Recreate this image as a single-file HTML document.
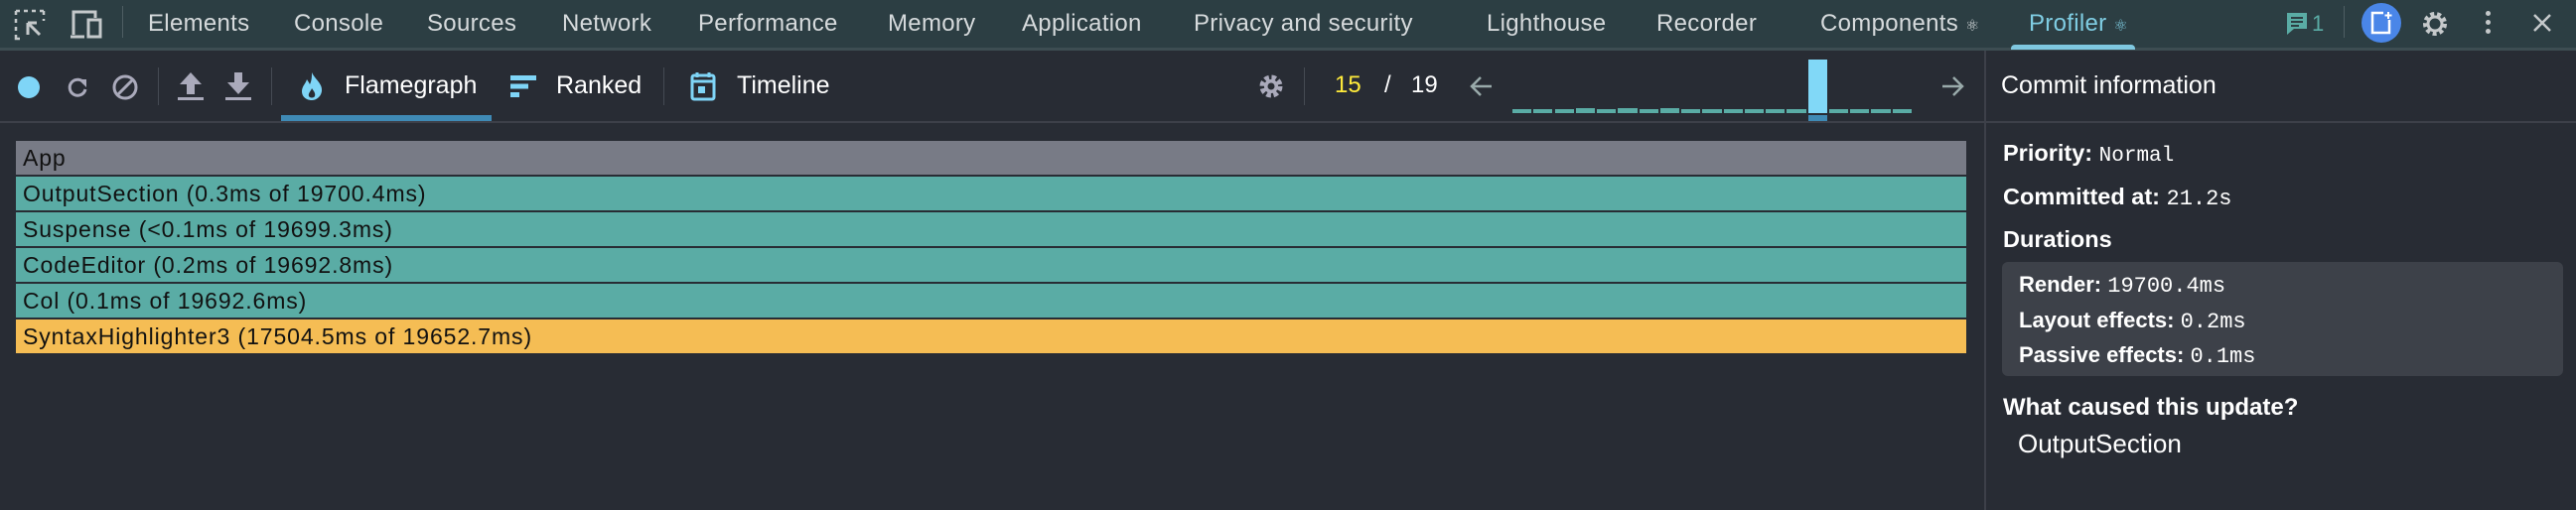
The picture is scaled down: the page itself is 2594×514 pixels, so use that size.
<!DOCTYPE html>
<html><head><meta charset="utf-8"><style>
*{margin:0;padding:0;box-sizing:border-box}
body{width:2594px;height:514px;background:#282c34;font-family:"Liberation Sans",sans-serif;position:relative;overflow:hidden;color:#fff}
.a{position:absolute;white-space:nowrap}
.tab{position:absolute;top:10px;font-size:24px;color:#d6dadc;letter-spacing:0.3px}
.tb{position:absolute;font-size:25px;color:#fff;top:72px}
.row{position:absolute;left:16px;width:1964px;height:34px;font-size:23px;letter-spacing:0.9px;color:#111;padding-left:7px;line-height:34px}
.teal{background:#5aaca5}
.mono{font-family:"Liberation Mono",monospace;font-weight:normal}
.lab{font-weight:bold;font-size:22px;color:#fff}
.h{font-size:23.5px}
</style></head><body>
<div class="a" style="left:0;top:0;width:2594px;height:49px;background:#2c3e43"></div>
<div class="a" style="left:0;top:48px;width:2594px;height:3px;background:#3d4d52"></div>
<svg class="a" style="left:14px;top:9px" width="34" height="32" viewBox="0 0 34 32"><path d="M2 2h4M10 2h4M18 2h4M26 2h4M2 2v4M2 10v4M2 18v4M2 26v4h4M30 2v4M30 10v2" stroke="#c5c9cb" stroke-width="2.5" fill="none"/><path d="M14 14v12M14 14h9M14 14l12 12" stroke="#c5c9cb" stroke-width="3" fill="none"/></svg>
<svg class="a" style="left:70px;top:9px" width="36" height="32" viewBox="0 0 36 32"><path d="M4 26V3h22v6" stroke="#c5c9cb" stroke-width="3" fill="none"/><path d="M1 28h14" stroke="#c5c9cb" stroke-width="3"/><rect x="19" y="11" width="12" height="17" stroke="#c5c9cb" stroke-width="3" fill="none"/></svg>
<div class="a" style="left:123px;top:6px;width:1px;height:32px;background:#4e5e63"></div>
<div class="tab" style="left:149px">Elements</div>
<div class="tab" style="left:296px">Console</div>
<div class="tab" style="left:430px">Sources</div>
<div class="tab" style="left:566px">Network</div>
<div class="tab" style="left:703px">Performance</div>
<div class="tab" style="left:894px">Memory</div>
<div class="tab" style="left:1029px">Application</div>
<div class="tab" style="left:1202px">Privacy and security</div>
<div class="tab" style="left:1497px">Lighthouse</div>
<div class="tab" style="left:1668px">Recorder</div>
<div class="tab" style="left:1833px">Components <span style="font-size:16px">⚛</span></div>
<div class="tab" style="left:2043px;color:#7fcde3">Profiler <span style="font-size:16px">⚛</span></div>
<div class="a" style="left:2025px;top:45px;width:125px;height:5px;background:#7fc8e0;border-radius:4px 4px 0 0"></div>
<svg class="a" style="left:2302px;top:12px" width="22" height="24" viewBox="0 0 22 24"><path d="M1 1h20v16H8l-7 6z" fill="#5aaca5"/><path d="M5 6h12M5 10h12M5 14h8" stroke="#2c3e43" stroke-width="2"/></svg>
<div class="a" style="left:2328px;top:11px;font-size:22px;color:#5aaca5">1</div>
<div class="a" style="left:2360px;top:6px;width:1px;height:32px;background:#4e5e63"></div>
<div class="a" style="left:2378px;top:3px;width:40px;height:40px;border-radius:50%;background:#4a86e8"></div>
<svg class="a" style="left:2386px;top:11px" width="24" height="24" viewBox="0 0 24 24"><path d="M14 2H3v20h17V9" stroke="#fff" stroke-width="2.5" fill="none"/><path d="M19 1v7M15.5 4.5h7" stroke="#fff" stroke-width="2"/></svg>
<svg class="a" style="left:2437px;top:9px" width="30" height="30" viewBox="0 0 30 30"><circle cx="15" cy="15" r="10" stroke="#c5c9cb" stroke-width="4" fill="none" stroke-dasharray="4 3"/><circle cx="15" cy="15" r="7" stroke="#c5c9cb" stroke-width="3" fill="none"/></svg>
<div class="a" style="left:2503px;top:11px;width:5px;height:5px;border-radius:50%;background:#c5c9cb;box-shadow:0 9px 0 #c5c9cb,0 18px 0 #c5c9cb"></div>
<svg class="a" style="left:2550px;top:13px" width="20" height="20"><path d="M2 2l16 16M18 2L2 18" stroke="#c5c9cb" stroke-width="2.5"/></svg>

<div class="a" style="left:18px;top:77px;width:22px;height:22px;border-radius:50%;background:#7fd5f7"></div>
<svg class="a" style="left:66px;top:76px" width="24" height="24" viewBox="0 0 24 24"><path d="M19 8A8 8 0 1 0 20 14" stroke="#aab" stroke-width="3" fill="none"/><path d="M13 4h8v8z" fill="#aab"/></svg>
<svg class="a" style="left:112px;top:74px" width="28" height="28" viewBox="0 0 28 28"><circle cx="14" cy="14" r="11" stroke="#aab" stroke-width="3" fill="none"/><path d="M6 22L22 6" stroke="#aab" stroke-width="3"/></svg>
<div class="a" style="left:159px;top:68px;width:1px;height:38px;background:#454a53"></div>
<svg class="a" style="left:178px;top:72px" width="28" height="30" viewBox="0 0 28 30"><path d="M14 1L3 13h7v10h8V13h7z" fill="#aab"/><rect x="1" y="26" width="26" height="3" fill="#aab"/></svg>
<svg class="a" style="left:226px;top:72px" width="28" height="30" viewBox="0 0 28 30"><path d="M14 23L3 11h7V1h8v10h7z" fill="#aab"/><rect x="1" y="26" width="26" height="3" fill="#aab"/></svg>
<div class="a" style="left:273px;top:68px;width:1px;height:38px;background:#454a53"></div>
<svg class="a" style="left:303px;top:73px" width="22" height="28" viewBox="0 0 22 28"><path d="M11 0C14 7 22 11 21 19 20 25 15 28 11 28 6 28 1 25 1 19 1 14 5 11 6 7 8 10 9 12 9 12 11 8 11 4 11 0z" fill="#7fd5f7"/><path d="M11 16c2 3 4 5 3 8-1 2-5 2-6 0-1-3 2-5 3-8z" fill="#282c34"/></svg>
<div class="tb" style="left:347px">Flamegraph</div>
<div class="a" style="left:283px;top:116px;width:212px;height:6px;background:#3f8ab5"></div>
<svg class="a" style="left:514px;top:76px" width="26" height="22"><rect x="0" y="0" width="26" height="5" fill="#7fd5f7"/><rect x="0" y="8.5" width="18" height="5" fill="#7fd5f7"/><rect x="0" y="17" width="9" height="5" fill="#7fd5f7"/></svg>
<div class="tb" style="left:560px">Ranked</div>
<div class="a" style="left:668px;top:68px;width:1px;height:38px;background:#454a53"></div>
<svg class="a" style="left:695px;top:72px" width="26" height="30" viewBox="0 0 26 30"><rect x="2" y="4" width="22" height="24" rx="2" stroke="#7fd5f7" stroke-width="3" fill="none"/><path d="M7 1v5M19 1v5M3 10h20" stroke="#7fd5f7" stroke-width="3"/><rect x="8" y="15" width="7" height="7" fill="#7fd5f7"/></svg>
<div class="tb" style="left:742px">Timeline</div>
<svg class="a" style="left:1266px;top:73px" width="28" height="28" viewBox="0 0 28 28"><circle cx="14" cy="14" r="9" stroke="#aab" stroke-width="5" fill="none" stroke-dasharray="4.5 2.6"/><circle cx="14" cy="14" r="7" fill="#aab"/><circle cx="14" cy="14" r="3.5" fill="#282c34"/></svg>
<div class="a" style="left:1313px;top:68px;width:1px;height:38px;background:#454a53"></div>
<div class="a" style="left:1344px;top:72px;font-size:24px;color:#ffeb3b">15</div>
<div class="a" style="left:1394px;top:72px;font-size:24px">/</div>
<div class="a" style="left:1421px;top:72px;font-size:24px">19</div>
<svg class="a" style="left:1480px;top:76px" width="24" height="22"><path d="M22 11H2M11 2L2 11l9 9" stroke="#9aa" stroke-width="2.5" fill="none"/></svg>
<svg class="a" style="left:1954px;top:76px" width="24" height="22"><path d="M2 11h20M13 2l9 9-9 9" stroke="#9aa" stroke-width="2.5" fill="none"/></svg>
<svg class="a" style="left:1520px;top:58px" width="420" height="66">
<g fill="#5aaca5">
<rect x="3" y="52" width="19" height="4"/><rect x="24" y="52" width="19" height="4"/><rect x="46" y="52" width="19" height="4"/><rect x="67" y="51" width="19" height="5"/><rect x="88" y="52" width="19" height="4"/><rect x="109" y="51" width="20" height="5"/><rect x="131" y="52" width="19" height="4"/><rect x="152" y="51" width="19" height="5"/><rect x="173" y="52" width="19" height="4"/><rect x="194" y="52" width="20" height="4"/><rect x="216" y="52" width="19" height="4"/><rect x="237" y="52" width="19" height="4"/><rect x="258" y="52" width="19" height="4"/><rect x="279" y="52" width="20" height="4"/>
<rect x="322" y="52" width="19" height="4"/><rect x="343" y="52" width="19" height="4"/><rect x="364" y="52" width="20" height="4"/><rect x="386" y="52" width="19" height="4"/></g>
<rect x="301" y="2" width="19" height="54" fill="#81d8f7"/><rect x="301" y="58" width="19" height="6" fill="#3f8ab5"/></svg>
<div class="a" style="left:0;top:122px;width:2594px;height:2px;background:#3d4049"></div>
<div class="a" style="left:1998px;top:51px;width:2px;height:463px;background:#3d4049"></div>
<div class="a" style="left:2015px;top:72px;font-size:25px">Commit information</div>

<div class="row" style="top:142px;background:#787b86">App</div>
<div class="row teal" style="top:178px">OutputSection (0.3ms of 19700.4ms)</div>
<div class="row teal" style="top:214px">Suspense (&lt;0.1ms of 19699.3ms)</div>
<div class="row teal" style="top:250px">CodeEditor (0.2ms of 19692.8ms)</div>
<div class="row teal" style="top:286px">Col (0.1ms of 19692.6ms)</div>
<div class="row" style="top:322px;background:#f5bd54">SyntaxHighlighter3 (17504.5ms of 19652.7ms)</div>

<div class="a lab h" style="left:2017px;top:141px">Priority: <span class="mono" style="font-size:21px">Normal</span></div>
<div class="a lab h" style="left:2017px;top:185px">Committed at: <span class="mono" style="font-size:22px">21.2s</span></div>
<div class="a lab h" style="left:2017px;top:228px">Durations</div>
<div class="a" style="left:2016px;top:264px;width:565px;height:115px;background:#3d4149;border-radius:6px"></div>
<div class="a lab" style="left:2033px;top:274px">Render: <span class="mono" style="font-size:22px">19700.4ms</span></div>
<div class="a lab" style="left:2033px;top:310px">Layout effects: <span class="mono" style="font-size:22px">0.2ms</span></div>
<div class="a lab" style="left:2033px;top:345px">Passive effects: <span class="mono" style="font-size:22px">0.1ms</span></div>
<div class="a lab" style="left:2017px;top:397px;font-size:24px">What caused this update?</div>
<div class="a" style="left:2032px;top:432px;font-size:26px">OutputSection</div>
</body></html>
